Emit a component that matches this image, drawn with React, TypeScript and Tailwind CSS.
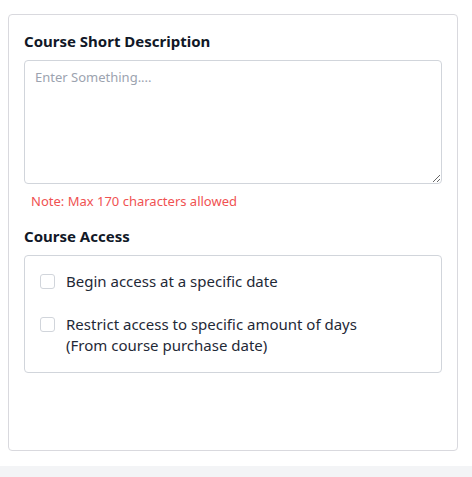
const FONT = "font-['Noto_Sans',_'Open_Sans',_sans-serif]";

export default function App() {
  return (
    <div className={`${FONT} min-h-[477px] bg-white`}>
      <div className="ml-2 mt-[14px] h-[437px] w-[450px] rounded border border-[#d9d9de] bg-white p-[15px]">
        <h2 className="mb-2 text-[15px] font-bold leading-[22px] text-[#111827]">
          Course Short Description
        </h2>
        <textarea
          placeholder="Enter Something...."
          className="block h-[124px] w-full resize-y rounded border border-[#d1d5db] px-[10px] py-[6px] text-[13px] leading-[20px] text-[#1f2937] placeholder:text-[#9ca3af] outline-none"
        />
        <p className="mt-[7px] pl-[7px] text-[13px] leading-[20px] text-[#f05252]">
          Note: Max 170 characters allowed
        </p>

        <h2 className="mb-2 mt-[14px] text-[15px] font-bold leading-[22px] text-[#111827]">
          Course Access
        </h2>
        <div className="flex flex-col gap-[22px] rounded border border-[#d1d5db] px-[15px] pb-4 pt-[15px]">
          <Check label="Begin access at a specific date" />
          <Check
            label="Restrict access to specific amount of days"
            sub="(From course purchase date)"
          />
        </div>
      </div>
      <div className="mt-[15px] h-[12px] bg-[#f3f4f6]" />
    </div>
  );
}

function Check({ label, sub }: { label: string; sub?: string }) {
  return (
    <label className="flex items-start gap-[11px] text-[15px] leading-[21px] text-[#1f2937]">
      <span className="mt-[3px] block h-[15px] w-[15px] shrink-0 rounded-[3px] border border-[#d1d5db] bg-white" />
      <span>
        {label}
        {sub && <span className="block">{sub}</span>}
      </span>
    </label>
  );
}
